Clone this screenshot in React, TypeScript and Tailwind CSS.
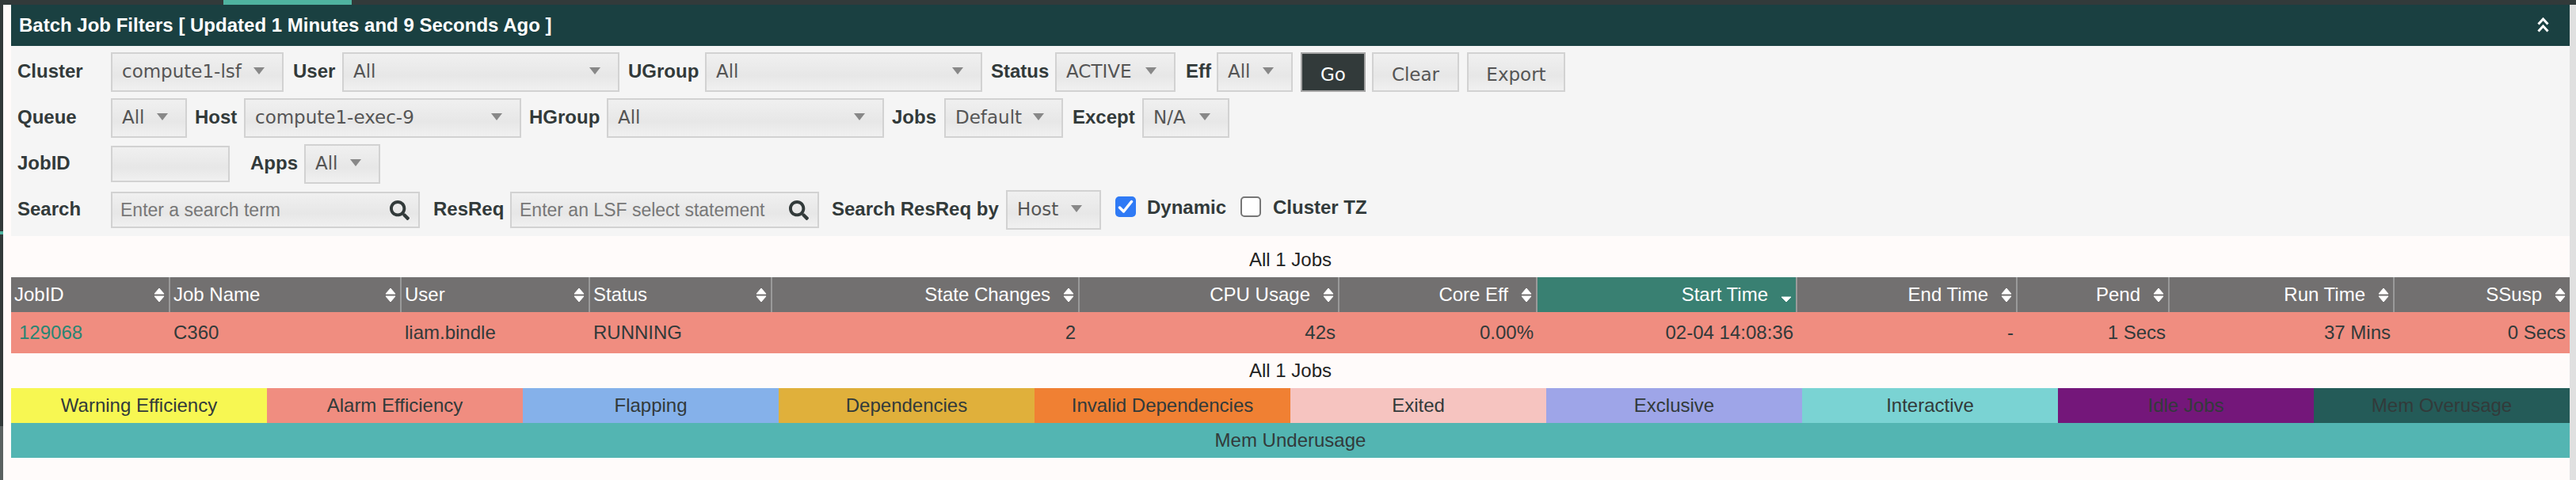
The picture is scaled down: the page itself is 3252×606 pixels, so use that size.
import React from "react";
import { FaSearch } from "react-icons/fa";

const fieldBg = "bg-gradient-to-b from-[#f0f0f0] via-[#e7e7e7] via-60% to-[#f0f0f0]";

function Sel({ w, text }: { w: string; text: string }) {
  return (
    <div className={`${w} h-[50px] shrink-0 flex items-center justify-between pl-[12px] pr-[22px] border-[2px] border-[#d2d2d2] ${fieldBg} text-[#555] text-[23px] font-['DejaVu_Sans',sans-serif]`}>
      <span className="-mt-[2px] whitespace-nowrap">{text}</span>
      <span className="-mt-[3px] w-0 h-0 border-x-[7px] border-x-transparent border-t-[9px] border-t-[#888]" />
    </div>
  );
}

function Lab({ w, text }: { w: string; text: string }) {
  return <span className={`${w} -mt-[2px] shrink-0 whitespace-nowrap font-bold text-[24px] text-[#323a3a]`}>{text}</span>;
}

function SearchBox({ text }: { text: string }) {
  return (
    <div className={`w-[390px] h-[46px] shrink-0 flex items-center justify-between pl-[10px] pr-[11px] border-[2px] border-[#d2d2d2] ${fieldBg} text-[#777] text-[23px]`}>
      <span className="whitespace-nowrap">{text}</span>
      <FaSearch className="text-[#323a3a] shrink-0" size={25} />
    </div>
  );
}

function SortIcon({ active }: { active?: boolean }) {
  return (
    <svg width="14" height="19" viewBox="0 0 14 19" className="shrink-0" fill="#fff" stroke="#fff" strokeWidth="1" strokeLinejoin="round">
      {!active && <path d="M7 1 L13 8 H1 Z" />}
      {active ? <path d="M1 12 H13 L7 18 Z" /> : <path d="M1 11 H13 L7 18 Z" />}
    </svg>
  );
}

const cols = [
  ["JobID", "w-[201px]", "l"],
  ["Job Name", "w-[292px]", "l"],
  ["User", "w-[238px]", "l"],
  ["Status", "w-[230px]", "l"],
  ["State Changes", "w-[388px]", "r"],
  ["CPU Usage", "w-[328px]", "r"],
  ["Core Eff", "w-[250px]", "r"],
  ["Start Time", "w-[328px]", "r"],
  ["End Time", "w-[278px]", "r"],
  ["Pend", "w-[192px]", "r"],
  ["Run Time", "w-[284px]", "r"],
  ["SSusp", "w-[221px]", "r"],
];
const vals = ["129068", "C360", "liam.bindle", "RUNNING", "2", "42s", "0.00%", "02-04 14:08:36", "-", "1 Secs", "37 Mins", "0 Secs"];
const legend: [string, string][] = [
  ["Warning Efficiency", "bg-[#f7f752]"],
  ["Alarm Efficiency", "bg-[#f08d80]"],
  ["Flapping", "bg-[#85b1ea]"],
  ["Dependencies", "bg-[#e0b03b]"],
  ["Invalid Dependencies", "bg-[#f08033]"],
  ["Exited", "bg-[#f6c4c0]"],
  ["Exclusive", "bg-[#9ea5e8]"],
  ["Interactive", "bg-[#7ad3d3]"],
  ["Idle Jobs", "bg-[#74177a]"],
  ["Mem Overusage", "bg-[#245b58]"],
];

const plainBtn = `h-[50px] shrink-0 ${fieldBg} border-[2px] border-[#d2d2d2] text-[#555] text-[23px] pt-[6px] font-['DejaVu_Sans',sans-serif]`;

export default function App() {
  return (
    <div className="w-[3252px] h-[606px] overflow-hidden bg-[#fffbfa] flex flex-col font-['Liberation_Sans',Arial,sans-serif] text-[#323a3a]">
      <div className="h-[6px] shrink-0 bg-[#323a3a] pl-[282px]">
        <div className="w-[162px] h-full bg-[#4fb3a0]" />
      </div>
      <div className="flex flex-1 min-h-0">
        <div className="w-[4px] shrink-0 flex flex-col bg-[#323a3a]">
          <div className="h-[286px] shrink-0" />
          <div className="h-[4px] shrink-0 bg-[#4fb3a0]" />
          <div className="h-[242px] shrink-0" />
          <div className="flex-1 bg-[#5a6160]" />
        </div>
        <div className="w-[10px] shrink-0" />
        <div className="w-[3230px] shrink-0 flex flex-col">
          <div className="h-[52px] shrink-0 bg-[#1a4041] flex items-center justify-between pl-[10px] pr-[26px] text-white font-bold text-[24px]">
            <span>Batch Job Filters [ Updated 1 Minutes and 9 Seconds Ago ]</span>
            <svg width="15" height="19" viewBox="0 0 15 19" fill="none" stroke="#fff" strokeWidth="3" className="-mt-[1px]">
              <path d="M1.5 8.5 L7.5 2 L13.5 8.5" />
              <path d="M1.5 17.5 L7.5 11 L13.5 17.5" />
            </svg>
          </div>
          <div className="h-[240px] shrink-0 bg-[#f5f5f5] pt-[8px] pl-[8px] flex flex-col gap-[8px]">
            <div className="flex items-center h-[50px]">
              <Lab w="w-[118px]" text="Cluster" />
              <Sel w="w-[218px]" text="compute1-lsf" />
              <Lab w="ml-[12px] w-[62px]" text="User" />
              <Sel w="w-[350px]" text="All" />
              <Lab w="ml-[11px] w-[97px]" text="UGroup" />
              <Sel w="w-[350px]" text="All" />
              <Lab w="ml-[11px] w-[81px]" text="Status" />
              <Sel w="w-[152px]" text="ACTIVE" />
              <Lab w="ml-[13px] w-[39px]" text="Eff" />
              <Sel w="w-[96px]" text="All" />
              <button className="ml-[10px] w-[82px] h-[50px] shrink-0 bg-[#323a3a] border-[2px] border-[#a5a5a5] text-white text-[23px] pt-[6px] font-['DejaVu_Sans',sans-serif]">Go</button>
              <button className={`ml-[8px] w-[110px] ${plainBtn}`}>Clear</button>
              <button className={`ml-[10px] w-[124px] ${plainBtn}`}>Export</button>
            </div>
            <div className="flex items-center h-[50px]">
              <Lab w="w-[118px]" text="Queue" />
              <Sel w="w-[96px]" text="All" />
              <Lab w="ml-[10px] w-[62px]" text="Host" />
              <Sel w="w-[350px]" text="compute1-exec-9" />
              <Lab w="ml-[10px] w-[98px]" text="HGroup" />
              <Sel w="w-[350px]" text="All" />
              <Lab w="ml-[10px] w-[66px]" text="Jobs" />
              <Sel w="w-[150px]" text="Default" />
              <Lab w="ml-[12px] w-[88px]" text="Except" />
              <Sel w="w-[110px]" text="N/A" />
            </div>
            <div className="flex items-center h-[50px]">
              <Lab w="w-[118px]" text="JobID" />
              <div className={`w-[150px] h-[46px] shrink-0 border-[2px] border-[#d2d2d2] ${fieldBg}`} />
              <Lab w="ml-[26px] w-[68px]" text="Apps" />
              <Sel w="w-[96px]" text="All" />
            </div>
            <div className="flex items-center h-[50px]">
              <Lab w="w-[118px]" text="Search" />
              <SearchBox text="Enter a search term" />
              <Lab w="ml-[17px] w-[97px]" text="ResReq" />
              <SearchBox text="Enter an LSF select statement" />
              <Lab w="ml-[16px] w-[220px]" text="Search ResReq by" />
              <Sel w="w-[120px]" text="Host" />
              <div className="ml-[18px] -mt-[8px] w-[26px] h-[26px] shrink-0 rounded-[5px] bg-[#2f7af5]">
                <svg width="26" height="26" viewBox="0 0 26 26" fill="none" stroke="#fff" strokeWidth="3.5" strokeLinecap="round" strokeLinejoin="round">
                  <path d="M5.5 14 L10.5 19 L20.5 6.5" />
                </svg>
              </div>
              <Lab w="ml-[14px] w-[118px] -mt-[6px]" text="Dynamic" />
              <div className="-mt-[8px] w-[26px] h-[26px] shrink-0 rounded-[5px] bg-white border-[2px] border-[#767676]" />
              <Lab w="ml-[15px] -mt-[6px]" text="Cluster TZ" />
            </div>
          </div>
          <div className="h-[52px] shrink-0 pt-[8px] flex items-center justify-center text-[24px] text-[#222]">All 1 Jobs</div>
          <div className="h-[44px] shrink-0 flex text-white text-[24px]">
            {cols.map(([t, w, a]) => (
              <div key={t} className={`${w} shrink-0 h-full flex items-center gap-[16px] pl-[4px] pr-[5px] ${t === "Start Time" ? "bg-[#398072]" : "bg-[#727070]"} ${t === "SSusp" ? "" : "border-r-[2px] border-[#9a9a9a]"} ${a === "l" ? "justify-between" : "justify-end"}`}>
                <span className="whitespace-nowrap">{t}</span>
                <SortIcon active={t === "Start Time"} />
              </div>
            ))}
          </div>
          <div className="h-[52px] shrink-0 flex bg-[#f08d80] text-[24px]">
            {cols.map(([t, w, a], i) => (
              <div key={t} className={`${w} shrink-0 h-full flex items-center whitespace-nowrap pr-[5px] ${a === "l" ? "justify-start" : "justify-end"} ${i === 0 ? "text-[#2a8573] pl-[10px]" : "pl-[4px]"}`}>
                {vals[i]}
              </div>
            ))}
          </div>
          <div className="h-[44px] shrink-0 flex items-center justify-center text-[24px] text-[#222]">All 1 Jobs</div>
          <div className="grid grid-cols-10 text-[24px]">
            {legend.map(([t, c]) => (
              <div key={t} className={`${c} h-[44px] flex items-center justify-center whitespace-nowrap`}>{t}</div>
            ))}
            <div className="col-span-10 h-[44px] bg-[#53b5b2] flex items-center justify-center">Mem Underusage</div>
          </div>
        </div>
        <div className="w-[8px] shrink-0 bg-[#e0e0e0]" />
      </div>
    </div>
  );
}
